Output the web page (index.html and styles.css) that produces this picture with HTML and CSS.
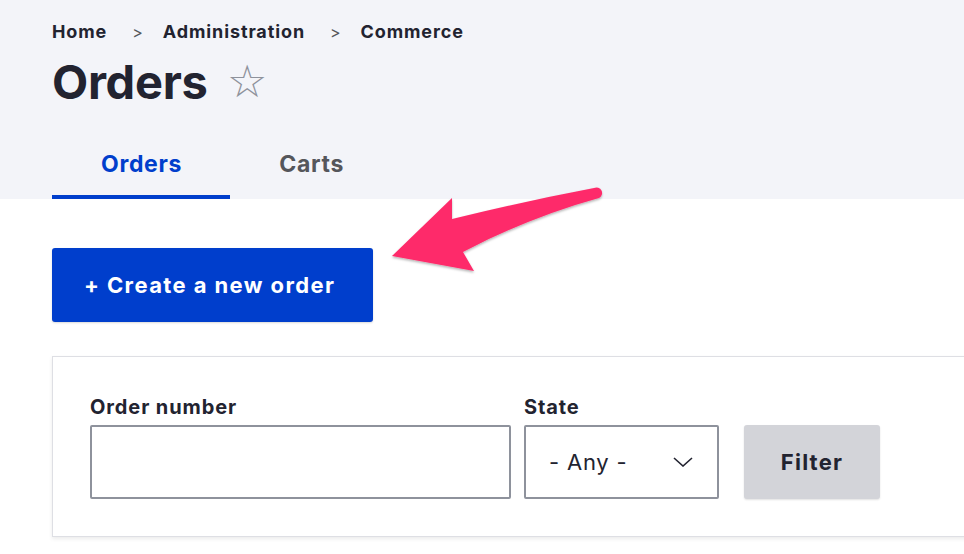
FILE: index.html
```html
<!DOCTYPE html>
<html lang="en">
<head>
<meta charset="utf-8">
<title>Orders</title>
<link rel="stylesheet" href="styles.css">
</head>
<body>
<div class="page">
  <header class="header">
    <nav class="breadcrumb">
      <a href="#">Home</a><span class="sep">&gt;</span>
      <a href="#">Administration</a><span class="sep">&gt;</span>
      <a href="#">Commerce</a>
    </nav>
    <h1 class="title">Orders <span class="star">&#9734;</span></h1>
    <nav class="tabs">
      <a href="#" class="tab tab-active">Orders</a>
      <a href="#" class="tab">Carts</a>
    </nav>
  </header>
  <main class="content">
    <a href="#" class="btn-primary">+ Create a new order</a>
    <form class="filters">
      <div class="field">
        <label class="label">Order number</label>
        <input type="text" class="input input-text">
      </div>
      <div class="field">
        <label class="label">State</label>
        <div class="select">
          <span>- Any -</span>
          <svg class="chev" width="20" height="10" viewBox="0 0 20 10"><path d="M1 1 L10 9 L19 1" fill="none" stroke="#222330" stroke-width="1.6"/></svg>
        </div>
      </div>
      <button type="button" class="btn-filter">Filter</button>
    </form>
  </main>
  <svg class="arrow" width="964" height="554" viewBox="0 0 964 554">
    <defs>
      <filter id="sh" x="-20%" y="-20%" width="140%" height="140%">
        <feDropShadow dx="0" dy="1.5" stdDeviation="1.2" flood-color="#000" flood-opacity="0.3"/>
      </filter>
    </defs>
    <path filter="url(#sh)" fill="#fe2c6b" d="M594 188 Q 525 201 452 219 L 452 198 L 392 256 L 474 271 L 463 252 Q 530 217 599 198 A 5 5 0 0 0 594 188 Z"/>
  </svg>
</div>
</body>
</html>
```
FILE: styles.css
```css
html, body {
  margin: 0;
  padding: 0;
  background: #fff;
  overflow: hidden;
}
body {
  font-family: Inter, "Noto Sans", sans-serif;
  color: #222330;
}
.page {
  position: relative;
  width: 964px;
  height: 554px;
  overflow: hidden;
}
.header {
  background: #f3f4f9;
  padding: 21px 0 0 52px;
}
.breadcrumb {
  display: flex;
  align-items: center;
  font-size: 18px;
  line-height: 22px;
  font-weight: 700;
  letter-spacing: 0.9px;
}
.breadcrumb a {
  color: #222330;
  text-decoration: none;
}
.breadcrumb .sep {
  font-weight: 400;
  font-size: 16px;
  color: #55565b;
  margin: 0 19px 0 25px;
}
.title {
  margin: 11px 0 0;
  font-size: 47px;
  line-height: 56px;
  font-weight: 700;
  letter-spacing: -0.3px;
  display: flex;
  align-items: center;
}
.star {
  font-weight: 300;
  font-size: 45px;
  color: #8e929c;
  margin-left: 19px;
  font-family: "DejaVu Sans", sans-serif;
}
.tabs {
  display: flex;
}
.tab {
  padding: 39px 48px 16px 49px;
  font-size: 23px;
  line-height: 30px;
  font-weight: 700;
  letter-spacing: 0.7px;
  color: #55565b;
  text-decoration: none;
  border-bottom: 4px solid transparent;
}
.tab-active {
  color: #003ecc;
  border-bottom-color: #003ecc;
}
.content {
  padding: 49px 0 0 52px;
}
.btn-primary {
  display: inline-flex;
  align-items: center;
  height: 74px;
  padding: 0 38px 0 32px;
  box-sizing: border-box;
  background: #003ecc;
  color: #fff;
  font-size: 22px;
  font-weight: 700;
  letter-spacing: 1.4px;
  text-decoration: none;
  border-radius: 3px;
  box-shadow: 0 1px 2px rgba(0,0,0,0.15);
}
.filters {
  margin: 34px -30px 0 0;
  border: 1px solid #dedfe4;
  box-shadow: 0 2px 4px rgba(0,0,0,0.08);
  padding: 38px 37px 37px;
  display: flex;
  align-items: flex-end;
}
.field {
  display: flex;
  flex-direction: column;
  margin-right: 13px;
}
.label {
  font-size: 20px;
  line-height: 24px;
  font-weight: 700;
  letter-spacing: 0.9px;
  margin-bottom: 6px;
}
.input {
  box-sizing: border-box;
  height: 74px;
  border: 2px solid #8e929c;
  border-radius: 2px;
  background: #fff;
}
.input-text {
  width: 421px;
  font: inherit;
}
.select {
  box-sizing: border-box;
  width: 195px;
  height: 74px;
  border: 2px solid #8e929c;
  border-radius: 2px;
  display: flex;
  align-items: center;
  justify-content: space-between;
  padding: 0 24px 0 23px;
  font-size: 22px;
  letter-spacing: 0.8px;
}
.chev {
  display: block;
}
.btn-filter {
  margin-left: 12px;
  width: 136px;
  height: 74px;
  border: 0;
  border-radius: 3px;
  background: #d3d4d9;
  color: #222330;
  font-family: inherit;
  font-size: 22px;
  font-weight: 700;
  letter-spacing: 1.2px;
  box-shadow: 0 1px 2px rgba(0,0,0,0.12);
}
.arrow {
  position: absolute;
  left: 0;
  top: 0;
  pointer-events: none;
}
```
